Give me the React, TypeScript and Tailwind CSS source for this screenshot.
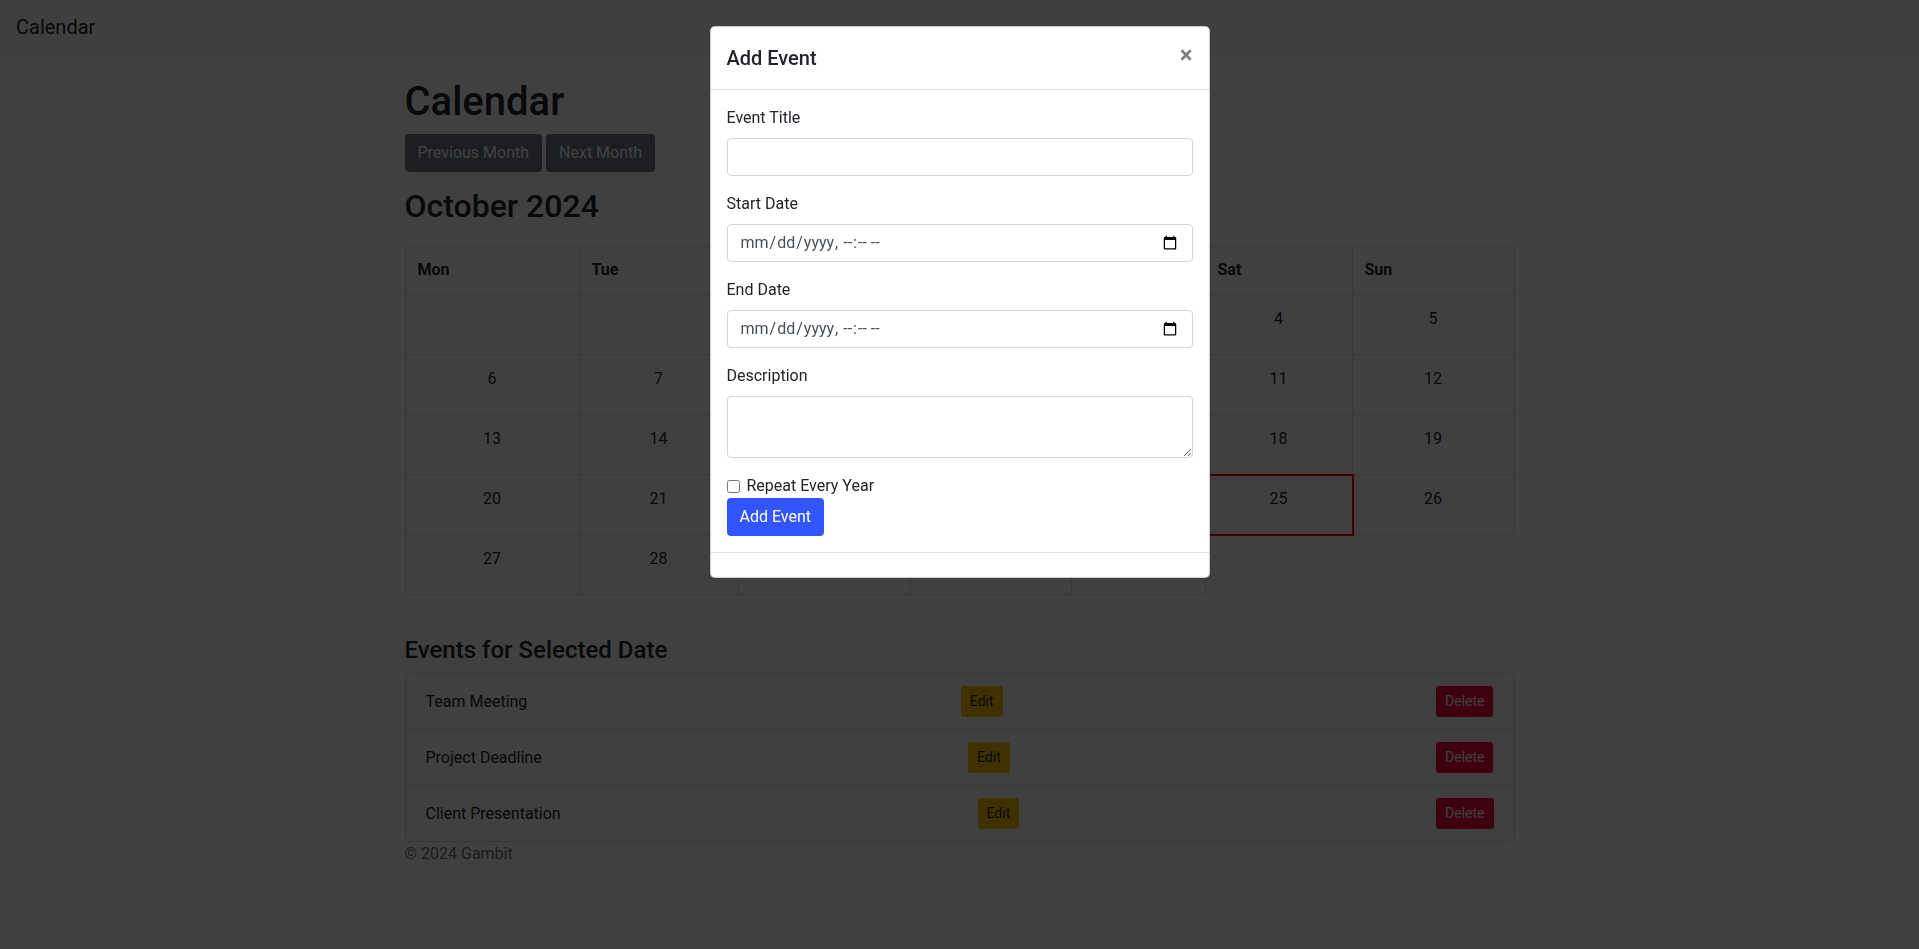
import React from 'react';

const days = ['Mon', 'Tue', 'Wed', 'Thu', 'Fri', 'Sat', 'Sun'];

const weeks: (number | null)[][] = [
  [null, null, 1, 2, 3, 4, 5],
  [6, 7, 8, 9, 10, 11, 12],
  [13, 14, 15, 16, 17, 18, 19],
  [20, 21, 22, 23, 24, 25, 26],
  [27, 28, 29, 30, 31],
];

const events = ['Team Meeting', 'Project Deadline', 'Client Presentation'];

const selectedDay = 25;

function CalendarGrid() {
  return (
    <div className="grid w-[1110px] grid-cols-[175px_159px_172px_161.5px_133.5px_147px_162px]">
      {days.map((d, i) => (
        <div
          key={d}
          className={
            'h-[49px] border-y border-r border-[#dee2e6] px-3 pt-[11px] font-bold leading-6' +
            (i === 0 ? ' border-l' : '')
          }
        >
          {d}
        </div>
      ))}
      {weeks.map((week, wi) =>
        week.map((day, di) => (
          <div
            key={`${wi}-${di}`}
            className={
              'h-[60px] border-b border-r border-[#dee2e6] px-3 pt-3 text-center leading-6' +
              (di === 0 ? ' border-l' : '') +
              (day === selectedDay ? ' relative z-10 outline-2 outline-[#ff0000] -outline-offset-1' : '')
            }
          >
            {day ?? ''}
          </div>
        ))
      )}
    </div>
  );
}

function EventList() {
  return (
    <ul className="rounded-[4px] border border-black/[.125]">
      {events.map((title, i) => (
        <li
          key={title}
          className={
            'flex items-center justify-between px-5 py-3' +
            (i < events.length - 1 ? ' border-b border-black/[.125]' : '')
          }
        >
          <span className="leading-6">{title}</span>
          <button className="h-[31px] rounded-[3.2px] border border-transparent bg-[#ffc400] px-2 text-[14px] leading-[21px] text-[#212529]">
            Edit
          </button>
          <button className="h-[31px] rounded-[3.2px] border border-transparent bg-[#f5003c] px-2 text-[14px] leading-[21px] text-white">
            Delete
          </button>
        </li>
      ))}
    </ul>
  );
}

function AddEventModal() {
  const inputCls =
    'block h-[38px] w-full rounded-[4px] border border-[#ced4da] bg-white px-3 py-1.5 text-base leading-6 text-[#495057]';
  return (
    <div className="fixed inset-0 z-50 overflow-y-auto">
      <div className="mx-auto mt-[26px] w-[500px] rounded-[5px] border border-black/20 bg-white">
        <div className="flex items-start justify-between border-b border-[#dee2e6] p-4">
          <h5 className="text-[20px] font-medium leading-[30px]">Add Event</h5>
          <button className="-m-4 ml-auto p-4 text-[24px] font-bold leading-none text-black opacity-50 [text-shadow:0_1px_0_#fff]">
            ×
          </button>
        </div>
        <div className="p-4">
          <div className="mb-4">
            <label className="mb-2 block leading-6">Event Title</label>
            <input type="text" className={inputCls} />
          </div>
          <div className="mb-4">
            <label className="mb-2 block leading-6">Start Date</label>
            <input type="datetime-local" className={inputCls} />
          </div>
          <div className="mb-4">
            <label className="mb-2 block leading-6">End Date</label>
            <input type="datetime-local" className={inputCls} />
          </div>
          <div className="mb-4">
            <label className="mb-2 block leading-6">Description</label>
            <textarea
              rows={2}
              className="block w-full resize-y rounded-[4px] border border-[#ced4da] bg-white px-3 py-1.5 text-base leading-6 text-[#495057]"
            />
          </div>
          <div className="relative block pl-5">
            <input type="checkbox" className="absolute -ml-5 mt-[6px] h-[13px] w-[13px]" />
            <label className="leading-6">Repeat Every Year</label>
          </div>
          <button className="h-[38px] rounded-[4px] border border-transparent bg-[#3355ff] px-3 leading-6 text-white">
            Add Event
          </button>
        </div>
        <div className="h-[25px] border-t border-[#dee2e6]" />
      </div>
    </div>
  );
}

export default function App() {
  return (
    <div className="min-h-screen bg-white font-['Roboto',sans-serif] text-base leading-6 text-[#212529]">
      <nav className="flex h-14 items-center bg-[#f8f9fa] px-4 pb-[3px]">
        <span className="text-[20px] leading-[30px] text-black/90">Calendar</span>
      </nav>

      <div className="mx-auto w-[1140px] px-[15px]">
        <h1 className="mb-2 mt-[22px] text-[40px] font-medium leading-[48px]">Calendar</h1>
        <div className="flex gap-1">
          <button className="h-[38px] rounded-[4px] border border-transparent bg-[#717a84] px-3 leading-6 text-white">
            Previous Month
          </button>
          <button className="h-[38px] rounded-[4px] border border-transparent bg-[#717a84] px-3 leading-6 text-white">
            Next Month
          </button>
        </div>
        <h2 className="mb-[21px] mt-[15px] text-[32px] font-medium leading-[38.4px]">October 2024</h2>

        <CalendarGrid />

        <h4 className="mb-2 mt-[41px] text-[24px] font-medium leading-[28.8px]">Events for Selected Date</h4>
        <EventList />

        <footer className="leading-6 text-[#6c757d]">© 2024 Gambit</footer>
      </div>

      <div className="fixed inset-0 z-40 bg-black/75" />
      <AddEventModal />
    </div>
  );
}
